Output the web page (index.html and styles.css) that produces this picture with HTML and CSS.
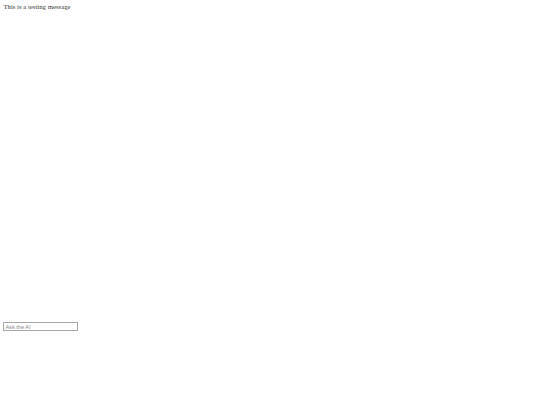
FILE: index.html
```html
<!DOCTYPE html>
<html>
<head>
<meta charset="utf-8">
<link rel="stylesheet" href="styles.css">
</head>
<body>
<div class="page">
  <div class="messages">
    <div class="message">This is a testing message</div>
  </div>
  <form class="composer">
    <input class="ask" type="text" placeholder="Ask the AI">
  </form>
</div>
</body>
</html>
```
FILE: styles.css
```css
html, body {
  margin: 0;
  padding: 0;
  background: #ffffff;
}
.page {
  padding: 3.4px;
  font-family: "Liberation Serif", "Times New Roman", serif;
  font-size: 6.75px;
  color: #3a3a3a;
}
.messages {
  height: 319px;
}
.message {
  line-height: 7.8px;
}
.composer {
  margin: 0;
}
.ask {
  box-sizing: border-box;
  width: 75px;
  height: 9px;
  margin: 0;
  padding: 0 1px;
  border: 0.6px solid #a8a8a8;
  font-family: "Liberation Sans", Arial, sans-serif;
  font-size: 5.6px;
  background: #fff;
  outline: none;
}
.ask::placeholder {
  color: #8a8a8a;
}
```
